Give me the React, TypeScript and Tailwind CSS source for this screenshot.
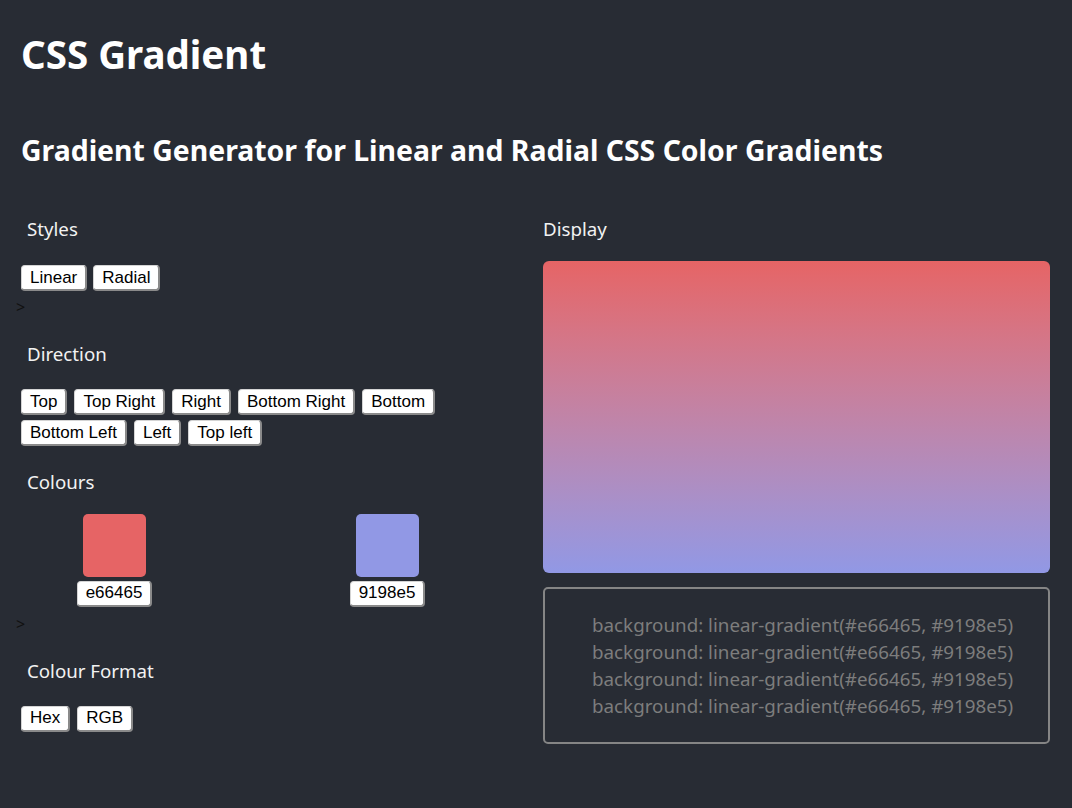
const directions = ["Top", "Top Right", "Right", "Bottom Right", "Bottom", "Bottom Left", "Left", "Top left"];
const code = "background: linear-gradient(#e66465, #9198e5)";

const font = { fontFamily: '"Noto Sans", "Open Sans", sans-serif' };

function Btn({ children }: { children: React.ReactNode }) {
  return (
    <button className="h-[26px] rounded-[4px] border border-b-2 border-r-2 border-[#d4d4d4] border-b-[#8a8a8a] border-r-[#8a8a8a] bg-white px-[8px] font-['Liberation_Sans',Arial,sans-serif] text-[17px] leading-[20px] text-black">
      {children}
    </button>
  );
}

function Label({ children }: { children: React.ReactNode }) {
  return <div className="h-[28px] pl-[11px] text-[18.7px] leading-[28px] text-[#f2f2f2]">{children}</div>;
}

function Swatch({ color, hex }: { color: string; hex: string }) {
  return (
    <div className="flex w-[75px] flex-col items-center">
      <div className="h-[63px] w-[63px] rounded-[5px]" style={{ background: color }} />
      <div className="mt-[3px]">
        <Btn>{hex}</Btn>
      </div>
    </div>
  );
}

export default function App() {
  return (
    <div className="min-h-screen bg-[#282c34] pb-10" style={font}>
      <header className="px-[21px] pt-[30px]">
        <h1 className="text-[38.5px] font-bold leading-[48px] text-white">CSS Gradient</h1>
        <h2 className="mt-[54px] text-[28.4px] font-bold leading-[36px] text-white">
          Gradient Generator for Linear and Radial CSS Color Gradients
        </h2>
      </header>

      <main className="mt-[47px] flex">
        {/* Controls */}
        <section className="w-[543px] shrink-0 pl-4">
          <Label>Styles</Label>
          <div className="mt-[22px] flex gap-[6px] pl-[5px]">
            <Btn>Linear</Btn>
            <Btn>Radial</Btn>
          </div>
          <div className="mt-[6px] h-[20px] text-[16px] leading-[20px] text-[#111]">&gt;</div>

          <div className="mt-[23px]">
            <Label>Direction</Label>
          </div>
          <div className="mt-[21px] flex w-[440px] flex-wrap gap-x-[7px] gap-y-[5px] pl-[5px]">
            {directions.map((d) => (
              <Btn key={d}>{d}</Btn>
            ))}
          </div>

          <div className="mt-[22px]">
            <Label>Colours</Label>
          </div>
          <div className="mt-[18px] flex gap-[198px] pl-[61px]">
            <Swatch color="#e66465" hex="e66465" />
            <Swatch color="#9198e5" hex="9198e5" />
          </div>
          <div className="mt-[7px] h-[20px] text-[16px] leading-[20px] text-[#111]">&gt;</div>

          <div className="mt-[23px]">
            <Label>Colour Format</Label>
          </div>
          <div className="mt-[21px] flex gap-[7px] pl-[5px]">
            <Btn>Hex</Btn>
            <Btn>RGB</Btn>
          </div>
        </section>

        {/* Preview */}
        <section className="w-[507px]">
          <div className="h-[28px] text-[18.7px] leading-[28px] text-[#f2f2f2]">Display</div>
          <div className="mt-[18px] h-[312px] rounded-[6px] bg-gradient-to-b from-[#e66465] to-[#9198e5]" />
          <div className="mt-[14px] flex h-[157px] flex-col justify-center rounded-[5px] border-2 border-[#858585] pl-[47px]">
            {[0, 1, 2, 3].map((i) => (
              <div key={i} className="text-[18.8px] leading-[27px] text-[#7d7d7d]">
                {code}
              </div>
            ))}
          </div>
        </section>
      </main>
    </div>
  );
}
